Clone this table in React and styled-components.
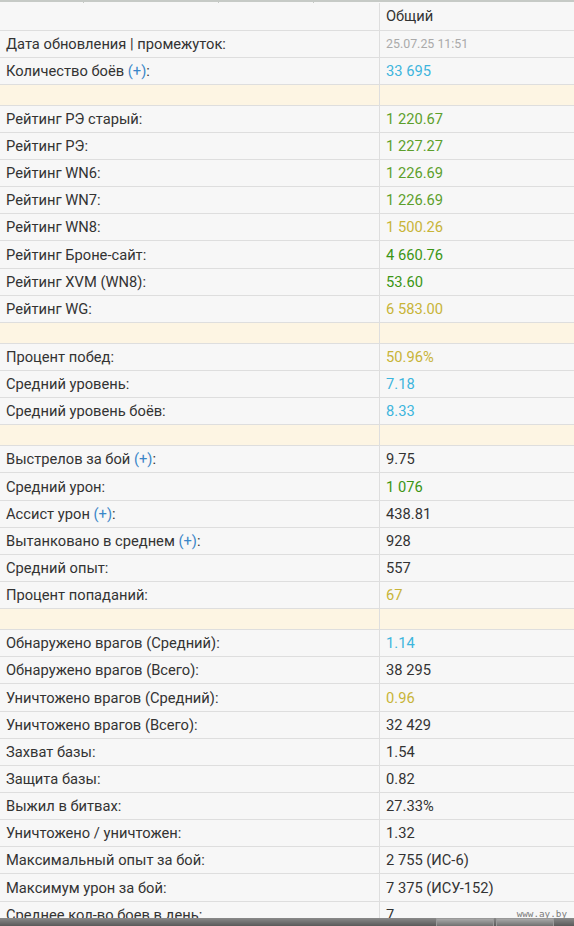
import React from "react";
import styled, { createGlobalStyle } from "styled-components";

const Global = createGlobalStyle`
  html, body { margin: 0; padding: 0; background: #f7f7f7; }
  body { font-family: Roboto, "Noto Sans", "Liberation Sans", sans-serif; overflow: hidden; }
`;

const Page = styled.div`
  position: relative;
  width: 574px;
  height: 926px;
  overflow: hidden;
  background: #f7f7f7;
`;

const TopStrip = styled.div`
  height: 3px;
  border-top: 2px solid #c6cac6;
  box-sizing: border-box;
  display: flex;
`;

const TopCell = styled.div`
  width: ${(p) => p.$w}px;
  height: 100%;
  border-right: 1px solid #c6cac6;
  flex: none;
`;

const Table = styled.div`
  display: grid;
  grid-template-columns: 380px 1fr;
`;

const Cell = styled.div`
  box-sizing: border-box;
  height: ${(p) => (p.$spacer ? "21px" : p.$head ? "27.5px" : "27.15px")};
  border-bottom: 1px solid #dedede;
  border-right: ${(p) => (p.$first ? "1px solid #dedede" : "none")};
  background: ${(p) => (p.$spacer ? "#fdf5e3" : "#f7f7f7")};
  padding: 0 6px;
  display: flex;
  align-items: center;
  font-size: 14.7px;
  color: #333;
  white-space: nowrap;
`;

const Label = styled.span`
  white-space: pre;
`;

const Value = styled.span`
  color: ${(p) => p.$c || "#333"};
  font-size: ${(p) => (p.$small ? "12.4px" : "14.7px")};
`;

const Plus = styled.span`
  color: #3a86c8;
`;

const Watermark = styled.div`
  position: absolute;
  right: 7px;
  bottom: 7px;
  font-family: "DejaVu Sans Mono", "Liberation Mono", monospace;
  font-size: 9.3px;
  color: #7a7a7a;
`;

const BottomBar = styled.div`
  position: absolute;
  left: 0;
  right: 0;
  bottom: 0;
  height: 8px;
  background: linear-gradient(#8a8a8a, #5a5a5a);
  display: flex;
  justify-content: flex-end;
  gap: 2px;
  padding-right: 20px;
`;

const BarBtn = styled.div`
  width: 58px;
  height: 100%;
  border: 1px solid #9a9a9a;
  border-bottom: none;
  background: linear-gradient(#a8a8a8, #707070);
  box-sizing: border-box;
`;

const BLUE = "#3db5dd";
const GREEN = "#5d9f2b";
const DGREEN = "#3b9514";
const YELLOW = "#c8b437";
const GREY = "#aaaaaa";

const P = () => <Plus>(+)</Plus>;

const rows = [
  { l: "Дата обновления | промежуток:", v: "25.07.25 11:51", c: GREY, small: true },
  { l: <>Количество боёв <P />:</>, v: "33 695", c: BLUE },
  null,
  { l: "Рейтинг РЭ старый:", v: "1 220.67", c: GREEN },
  { l: "Рейтинг РЭ:", v: "1 227.27", c: GREEN },
  { l: "Рейтинг WN6:", v: "1 226.69", c: GREEN },
  { l: "Рейтинг WN7:", v: "1 226.69", c: GREEN },
  { l: "Рейтинг WN8:", v: "1 500.26", c: YELLOW },
  { l: "Рейтинг Броне-сайт:", v: "4 660.76", c: DGREEN },
  { l: "Рейтинг XVM (WN8):", v: "53.60", c: DGREEN },
  { l: "Рейтинг WG:", v: "6 583.00", c: YELLOW },
  null,
  { l: "Процент побед:", v: "50.96%", c: YELLOW },
  { l: "Средний уровень:", v: "7.18", c: BLUE },
  { l: "Средний уровень боёв:", v: "8.33", c: BLUE },
  null,
  { l: <>Выстрелов за бой <P />:</>, v: "9.75" },
  { l: "Средний урон:", v: "1 076", c: DGREEN },
  { l: <>Ассист урон <P />:</>, v: "438.81" },
  { l: <>Вытанковано в среднем <P />:</>, v: "928" },
  { l: "Средний опыт:", v: "557" },
  { l: "Процент попаданий:", v: "67", c: YELLOW },
  null,
  { l: "Обнаружено врагов (Средний):", v: "1.14", c: BLUE },
  { l: "Обнаружено врагов (Всего):", v: "38 295" },
  { l: "Уничтожено врагов (Средний):", v: "0.96", c: YELLOW },
  { l: "Уничтожено врагов (Всего):", v: "32 429" },
  { l: "Захват базы:", v: "1.54" },
  { l: "Защита базы:", v: "0.82" },
  { l: "Выжил в битвах:", v: "27.33%" },
  { l: "Уничтожено / уничтожен:", v: "1.32" },
  { l: "Максимальный опыт за бой:", v: "2 755 (ИС-6)" },
  { l: "Максимум урон за бой:", v: "7 375 (ИСУ-152)" },
  { l: "Среднее кол-во боев в день:", v: "7" },
];

export default function App() {
  return (
    <Page>
      <Global />
      <TopStrip>
        <TopCell $w={83} />
        <TopCell $w={134} />
        <TopCell $w={94} />
      </TopStrip>
      <Table>
        <Cell $head $first />
        <Cell $head>Общий</Cell>
        {rows.map((r, i) =>
          r === null ? (
            <React.Fragment key={i}>
              <Cell $spacer $first />
              <Cell $spacer />
            </React.Fragment>
          ) : (
            <React.Fragment key={i}>
              <Cell $first>
                <Label>{r.l}</Label>
              </Cell>
              <Cell>
                <Value $c={r.c} $small={r.small}>{r.v}</Value>
              </Cell>
            </React.Fragment>
          )
        )}
      </Table>
      <Watermark>www.ay.by</Watermark>
      <BottomBar>
        <BarBtn />
        <BarBtn />
      </BottomBar>
    </Page>
  );
}
